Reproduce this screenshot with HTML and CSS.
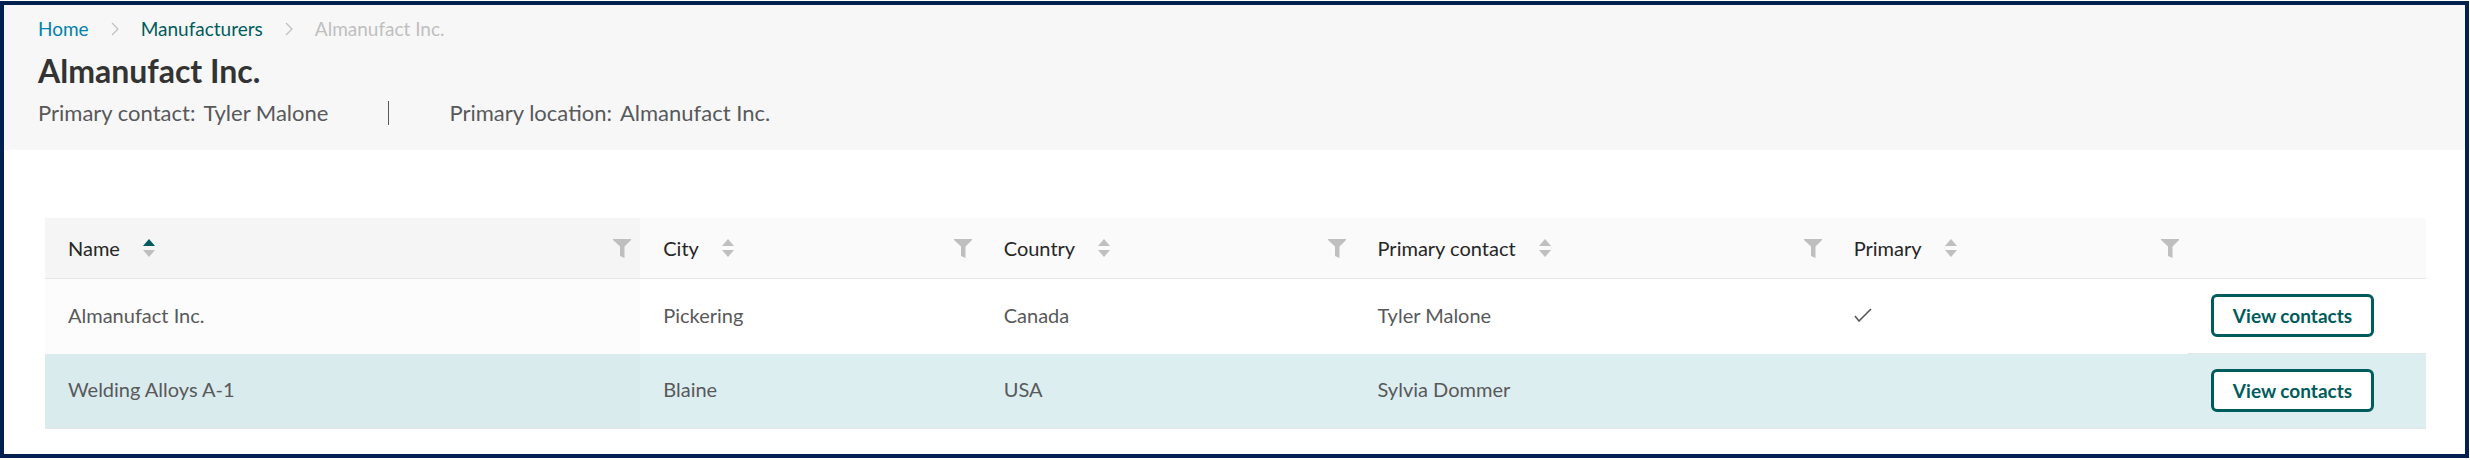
FILE: index.html
```html
<!DOCTYPE html>
<html lang="en">
<head>
    <meta charset="UTF-8">
    <title>Almanufact Inc.</title>
    <link rel="stylesheet" href="styles.css">
</head>
<body>
<svg class="sprite">
    <symbol id="chevron" viewBox="0 0 8 14"><path d="M1 1l6 6-6 6" fill="none" stroke="currentColor" stroke-width="1.2"/></symbol>
    <symbol id="sort" viewBox="0 0 12 18"><path class="up" d="M6 0l6 7H0z"/><path class="down" d="M0 11h12l-6 7z"/></symbol>
    <symbol id="filter" viewBox="0 0 18 19"><path d="M0 0h18v1l-6.500 6.500v11.500l-4.500-2V7.500L0 1z" fill="currentColor"/></symbol>
    <symbol id="check" viewBox="0 0 18 14"><path d="M1 8l4 5L17 1" fill="none" stroke="currentColor" stroke-width="1.6"/></symbol>
</svg>
<div class="page">
    <header class="page-header">
        <nav class="breadcrumb">
            <a class="home" href="#">Home</a>
            <svg class="chevron"><use href="#chevron"/></svg>
            <a href="#">Manufacturers</a>
            <svg class="chevron"><use href="#chevron"/></svg>
            <span class="current">Almanufact Inc.</span>
        </nav>
        <h1>Almanufact Inc.</h1>
        <div class="meta">
            <span class="meta-item"><span>Primary contact:</span><span>Tyler Malone</span></span>
            <span class="meta-item"><span>Primary location:</span><span>Almanufact Inc.</span></span>
        </div>
    </header>
    <main>
        <table class="grid">
            <colgroup>
                <col class="col-name">
                <col class="col-city">
                <col class="col-country">
                <col class="col-contact">
                <col class="col-primary">
                <col class="col-action">
            </colgroup>
            <thead>
            <tr>
                <th class="sorted"><div class="head"><span>Name</span><button class="sort asc" aria-label="Sort"><svg><use href="#sort"/></svg></button><button class="filter" aria-label="Filter"><svg><use href="#filter"/></svg></button></div></th>
                <th><div class="head"><span>City</span><button class="sort" aria-label="Sort"><svg><use href="#sort"/></svg></button><button class="filter" aria-label="Filter"><svg><use href="#filter"/></svg></button></div></th>
                <th><div class="head"><span>Country</span><button class="sort" aria-label="Sort"><svg><use href="#sort"/></svg></button><button class="filter" aria-label="Filter"><svg><use href="#filter"/></svg></button></div></th>
                <th><div class="head"><span>Primary contact</span><button class="sort" aria-label="Sort"><svg><use href="#sort"/></svg></button><button class="filter" aria-label="Filter"><svg><use href="#filter"/></svg></button></div></th>
                <th><div class="head"><span>Primary</span><button class="sort" aria-label="Sort"><svg><use href="#sort"/></svg></button><button class="filter" aria-label="Filter"><svg><use href="#filter"/></svg></button></div></th>
                <th></th>
            </tr>
            </thead>
            <tbody>
            <tr>
                <td class="sorted">Almanufact Inc.</td>
                <td>Pickering</td>
                <td>Canada</td>
                <td>Tyler Malone</td>
                <td><svg class="check"><use href="#check"/></svg></td>
                <td class="action"><button class="btn">View contacts</button></td>
            </tr>
            <tr class="active">
                <td class="sorted">Welding Alloys A-1</td>
                <td>Blaine</td>
                <td>USA</td>
                <td>Sylvia Dommer</td>
                <td></td>
                <td class="action"><button class="btn">View contacts</button></td>
            </tr>
            </tbody>
        </table>
    </main>
</div>
</body>
</html>
```
FILE: styles.css
```css
*{box-sizing:border-box;}
body{margin:0;padding:1px 1px 2px 0;background:#fff;color:#58595b;font:20px/24px Lato,"Noto Sans",sans-serif;}
button{margin:0;padding:0;border:0;background:none;font:inherit;cursor:pointer;}
svg{display:block;}
.sprite{position:absolute;width:0;height:0;}
.page{border:4px solid #00204f;padding-bottom:25px;}

.page-header{background:#f7f7f7;padding:12px 34px 25px;}
.breadcrumb{display:flex;align-items:center;font-size:19px;line-height:24px;}
.breadcrumb a{color:#005c5c;text-decoration:none;}
.breadcrumb .home{color:#0082ab;}
.breadcrumb .current{color:#bfbfbf;}
.chevron{width:8px;height:14px;margin:0 22px;color:#bfbfbf;}
h1{margin:12px 0;color:#333;font-size:32px;line-height:36px;font-weight:700;}
.meta{display:flex;font-size:22px;line-height:24px;}
.meta-item{display:flex;gap:8px;}
.meta-item + .meta-item{margin-left:60px;padding-left:60px;border-left:1px solid #58595b;}

main{padding:68px 39px 0 41px;}
.grid{width:100%;table-layout:fixed;border-collapse:separate;border-spacing:0;border-bottom:1px solid #e6e6e6;}
.col-name{width:25%;}
.col-city{width:14.3%;}
.col-country{width:15.7%;}
.col-contact{width:20%;}
.col-primary{width:15%;}
.col-action{width:10%;}
.grid th{height:61px;padding:0 9px 0 23px;background:#fafafa;border-bottom:1px solid #e6e6e6;color:#262626;font-weight:400;text-align:left;}
.grid th.sorted{background:#f5f5f5;}
.grid td{height:75px;padding:0 23px 4px;}
.grid td.sorted{background:#fcfcfc;}
.active td{background:#ddeef0;}
.grid .active td.sorted{background:#daebed;}
.grid .action{padding-bottom:1px;border-bottom:1px solid #e6e6e6;}
.grid .active td{height:74px;}
.grid .active .action{border-bottom:0;}
.head{display:flex;align-items:center;}
.sort{--up:#bfbfbf;margin-left:23px;}
.sort.asc{--up:#005c5c;}
.sort svg{width:12px;height:18px;}
.up{fill:var(--up);}
.down{fill:#bfbfbf;}
.filter{margin-left:auto;color:#bfbfbf;}
.filter svg{width:18px;height:19px;}
.check{width:18px;height:14px;}
.btn{height:43px;padding:0 19px;border:3px solid #005c5c;border-radius:6px;background:#fff;color:#005c5c;font-size:19px;font-weight:700;}
```
